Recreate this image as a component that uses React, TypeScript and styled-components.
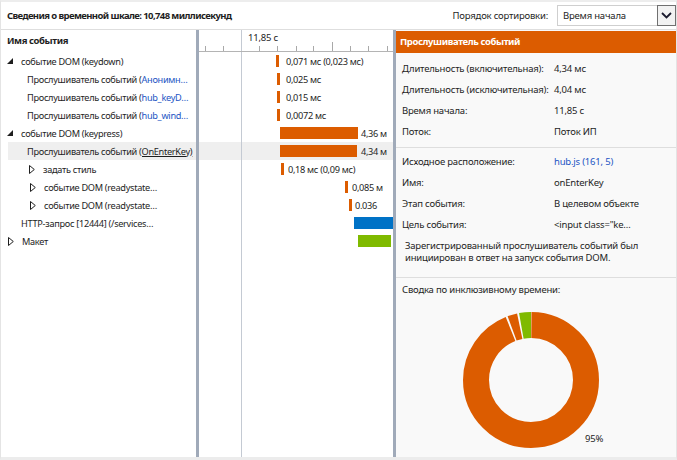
import React from 'react'
import styled, { createGlobalStyle } from 'styled-components'

const palette = {
	orange: '#dc5c00',
	blue: '#0072c6',
	green: '#7fba00',
	link: '#1c55c4',
	splitter: '#a0aab9',
	grid: '#c4cad3',
	line: '#dedede',
	panel: '#f9f9f9',
	text: '#1e1e1e',
	selected: '#efefef',
}

const GlobalStyle = createGlobalStyle`
	html, body { margin: 0; padding: 0; background: #fff; }
	body {
		font-family: "Noto Sans", "Open Sans", sans-serif;
		font-size: 9.5px;
		letter-spacing: -0.2px;
		color: ${palette.text};
	}
	* { box-sizing: border-box; }
`

type TreeItem = { indent: number; icon?: 'open' | 'closed'; text: string; link?: string; underline?: string; selected?: boolean }

const tree: TreeItem[] = [
	{ indent: 6, icon: 'open', text: 'событие DOM (keydown)' },
	{ indent: 12, text: 'Прослушиватель событий (', link: 'Анонимн…' },
	{ indent: 12, text: 'Прослушиватель событий (', link: 'hub_keyD…' },
	{ indent: 12, text: 'Прослушиватель событий (', link: 'hub_wind…' },
	{ indent: 6, icon: 'open', text: 'событие DOM (keypress)' },
	{ indent: 12, text: 'Прослушиватель событий ', underline: '(OnEnterKey)', selected: true },
	{ indent: 28, icon: 'closed', text: 'задать стиль' },
	{ indent: 29, icon: 'closed', text: 'событие DOM (readystate…' },
	{ indent: 29, icon: 'closed', text: 'событие DOM (readystate…' },
	{ indent: 6, text: 'HTTP-запрос [12444] (/services…' },
	{ indent: 7, icon: 'closed', text: 'Макет' },
]

type Span = { left: number; width: number; color: string; gap?: number; label?: string; selected?: boolean }

const spans: Span[] = [
	{ left: 77, width: 3, color: palette.orange, gap: 7, label: '0,071 мс (0,023 мс)' },
	{ left: 78, width: 3, color: palette.orange, gap: 6, label: '0,025 мс' },
	{ left: 78, width: 3, color: palette.orange, gap: 6, label: '0,015 мс' },
	{ left: 78, width: 3, color: palette.orange, gap: 6, label: '0,0072 мс' },
	{ left: 81, width: 78, color: palette.orange, gap: 3, label: '4,36 м' },
	{ left: 81, width: 77, color: palette.orange, gap: 4, label: '4,34 м', selected: true },
	{ left: 82, width: 3, color: palette.orange, gap: 4, label: '0,18 мс (0,09 мс)' },
	{ left: 146, width: 3, color: palette.orange, gap: 4, label: '0,085 м' },
	{ left: 150, width: 3, color: palette.orange, gap: 3, label: '0.036' },
	{ left: 155, width: 60, color: palette.blue },
	{ left: 159, width: 33, color: palette.green },
]

const general = [
	['Длительность (включительная):', '4,34 мс'],
	['Длительность (исключительная):', '4,04 мс'],
	['Время начала:', '11,85 с'],
	['Поток:', 'Поток ИП'],
]

const source = [
	['Исходное расположение:', 'hub.js (161, 5)', true],
	['Имя:', 'onEnterKey'],
	['Этап события:', 'В целевом объекте'],
	['Цель события:', '<input class="ke…'],
] as [string, string, boolean?][]

const ticks = [6, 24, 42, 60, 78, 97, 114, 133, 151, 169, 188]

const OpenArrow = () => (
	<svg width="6" height="6" viewBox="0 0 6 6">
		<polygon points="6,0 6,6 0,6" fill="#1e1e1e" />
	</svg>
)

const ClosedArrow = () => (
	<svg width="6" height="9" viewBox="0 0 6 9">
		<polygon points="0.5,0.5 5.3,4.5 0.5,8.5" fill="none" stroke="#1e1e1e" strokeWidth="1" />
	</svg>
)

const Chevron = () => (
	<svg width="11" height="7" viewBox="0 0 11 7">
		<polyline points="1,1 5.5,5.5 10,1" fill="none" stroke="#1a1a2e" strokeWidth="1.8" />
	</svg>
)

const Ruler = () => (
	<svg width="194" height="22" viewBox="0 0 194 22">
		{ticks.map((x, i) => (
			<line key={i} x1={x + 0.5} x2={x + 0.5} y1={i === 2 ? 0 : i === 7 ? 12 : 16} y2={22} stroke={i === 2 ? palette.grid : '#a9a9a9'} strokeWidth="1" />
		))}
		<line x1="0" x2="194" y1="21.5" y2="21.5" stroke="#b4b4b4" strokeWidth="1" />
		<text x="49" y="10.5" fontSize="9.5" fill="#1e1e1e" fontFamily="Noto Sans, sans-serif" letterSpacing="-0.2">
			11,85 с
		</text>
	</svg>
)

const C = 2 * Math.PI * 55
const seg = (startDeg: number, endDeg: number) => ({
	strokeDasharray: `${((endDeg - startDeg) / 360) * C} ${C}`,
	strokeDashoffset: -((startDeg / 360) * C),
})

const Donut = () => (
	<svg width="160" height="150" viewBox="0 0 160 150">
		<g transform="rotate(-90 70 74)">
			<circle cx="70" cy="74" r="55" fill="none" stroke={palette.orange} strokeWidth="26" style={seg(0.4, 337.6)} />
			<circle cx="70" cy="74" r="55" fill="none" stroke={palette.orange} strokeWidth="26" style={seg(339.3, 347.6)} />
			<circle cx="70" cy="74" r="55" fill="none" stroke={palette.green} strokeWidth="26" style={seg(349.3, 359.6)} />
		</g>
		<text x="124" y="136" fontSize="9.5" fill="#1e1e1e" fontFamily="Noto Sans, sans-serif" letterSpacing="-0.2">
			95%
		</text>
	</svg>
)

const App = () => {
	return (
		<>
			<GlobalStyle />
			<Frame>
				<Header>
					<Title>Сведения о временной шкале: 10,748 миллисекунд</Title>
					<SortGroup>
						<span>Порядок сортировки:</span>
						<Select>
							<SelectText>Время начала</SelectText>
							<SelectButton>
								<Chevron />
							</SelectButton>
						</Select>
					</SortGroup>
				</Header>
				<Main>
					<TreePane>
						<PaneTitle>Имя события</PaneTitle>
						{tree.map((item, i) => (
							<TreeRow key={i} $indent={item.indent} $selected={item.selected}>
								<Expander>{item.icon === 'open' ? <OpenArrow /> : item.icon === 'closed' ? <ClosedArrow /> : null}</Expander>
								<RowText>
									{item.text}
									{item.link && <Link>{item.link}</Link>}
									{item.underline && <Underlined>{item.underline}</Underlined>}
								</RowText>
							</TreeRow>
						))}
					</TreePane>
					<Splitter />
					<TimelinePane>
						<Ruler />
						<TimelineBody>
							{spans.map((s, i) => (
								<TimeRow key={i} $selected={s.selected}>
									<Bar $color={s.color} style={{ marginLeft: s.left, width: s.width }} />
									{s.label && <BarLabel style={{ marginLeft: s.gap }}>{s.label}</BarLabel>}
								</TimeRow>
							))}
						</TimelineBody>
					</TimelinePane>
					<Splitter />
					<DetailsPane>
						<DetailsTitle>Прослушиватель событий</DetailsTitle>
						<Section $pad="5px 0 5px 6px">
							{general.map(([k, v]) => (
								<Field key={k}>
									<span>{k}</span>
									<span>{v}</span>
								</Field>
							))}
						</Section>
						<Section $pad="3px 0 13px 6px">
							{source.map(([k, v, link]) => (
								<Field key={k}>
									<span>{k}</span>
									{link ? <Link>{v}</Link> : <span>{v}</span>}
								</Field>
							))}
							<Description>
								Зарегистрированный прослушиватель событий был
								<br />
								инициирован в ответ на запуск события DOM.
							</Description>
						</Section>
						<ChartSection>
							<ChartTitle>Сводка по инклюзивному времени:</ChartTitle>
							<ChartBox>
								<Donut />
							</ChartBox>
						</ChartSection>
					</DetailsPane>
				</Main>
			</Frame>
		</>
	)
}

const Frame = styled.div`
	width: 677px;
	height: 460px;
	border: 1px solid #e4e4e4;
	border-top: 2px solid #ededed;
	border-bottom: 3px solid #ececec;
	display: flex;
	flex-direction: column;
	background: #fff;
	overflow: hidden;
`

const Header = styled.div`
	height: 28px;
	flex: none;
	display: flex;
	align-items: center;
	justify-content: space-between;
	padding: 0 0 0 6px;
	border-bottom: 1px solid ${palette.line};
`

const Title = styled.div`
	font-weight: 700;
	letter-spacing: -0.6px;
`

const SortGroup = styled.div`
	display: flex;
	align-items: center;
	gap: 9px;
`

const Select = styled.div`
	width: 119px;
	height: 21px;
	border: 1px solid #cfcfcf;
	display: flex;
	align-items: stretch;
	background: #fff;
`

const SelectText = styled.span`
	flex: 1;
	display: flex;
	align-items: center;
	padding-left: 5px;
`

const SelectButton = styled.span`
	width: 19px;
	border: 1px solid #707070;
	margin: -1px -1px -1px 0;
	background: #f2f2f2;
	display: flex;
	align-items: center;
	justify-content: center;
`

const Main = styled.div`
	flex: 1;
	display: flex;
	min-height: 0;
`

const TreePane = styled.div`
	width: 195px;
	flex: none;
	overflow: hidden;
`

const PaneTitle = styled.div`
	height: 22px;
	line-height: 22px;
	padding-left: 6px;
	font-weight: 700;
	letter-spacing: -0.4px;
`

const TreeRow = styled.div<{ $indent: number; $selected?: boolean }>`
	height: 18px;
	display: flex;
	align-items: center;
	padding-left: ${({ $indent }) => $indent}px;
	padding-right: 2px;
	white-space: nowrap;
	font-size: 9.2px;
	letter-spacing: -0.3px;
	background: ${({ $selected }) => ($selected ? `linear-gradient(to right, transparent 7px, ${palette.selected} 7px)` : 'transparent')};
`

const Expander = styled.span`
	width: 14px;
	flex: none;
	display: flex;
	align-items: center;
`

const RowText = styled.span`
	flex: 1;
	overflow: hidden;
	text-overflow: ellipsis;
	min-width: 0;
`

const Link = styled.span`
	color: ${palette.link};
`

const Underlined = styled.span`
	text-decoration: underline;
`

const Splitter = styled.div`
	width: 3px;
	flex: none;
	background: ${palette.splitter};
`

const TimelinePane = styled.div`
	width: 194px;
	flex: none;
	display: flex;
	flex-direction: column;
	overflow: hidden;

	& > svg {
		display: block;
		flex: none;
	}
`

const gridLine = `linear-gradient(to right, transparent 42px, ${palette.grid} 42px, ${palette.grid} 43px, transparent 43px)`

const TimelineBody = styled.div`
	flex: 1;
	background-image: ${gridLine};
`

const TimeRow = styled.div<{ $selected?: boolean }>`
	height: 18px;
	display: flex;
	align-items: center;
	overflow: hidden;
	white-space: nowrap;
	background-color: ${({ $selected }) => ($selected ? palette.selected : 'transparent')};
	background-image: ${gridLine};
`

const Bar = styled.div<{ $color: string }>`
	flex: none;
	height: 12px;
	background: ${({ $color }) => $color};
`

const BarLabel = styled.span`
	flex: none;
	font-size: 9.2px;
	letter-spacing: -0.3px;
`

const DetailsPane = styled.div`
	flex: 1;
	background: ${palette.panel};
	display: flex;
	flex-direction: column;
	min-width: 0;
`

const DetailsTitle = styled.div`
	margin-top: 1px;
	height: 22px;
	line-height: 22px;
	padding-left: 4px;
	background: ${palette.orange};
	color: #fff;
	font-weight: 700;
	letter-spacing: -0.4px;
`

const Section = styled.div<{ $pad: string }>`
	padding: ${({ $pad }) => $pad};
	border-bottom: 1px solid ${palette.line};
`

const Field = styled.div`
	display: grid;
	grid-template-columns: 152px 1fr;
	height: 21px;
	align-items: center;
	white-space: nowrap;
`

const Description = styled.div`
	margin-top: 5px;
	padding-left: 3px;
	line-height: 12px;
`

const ChartSection = styled.div`
	flex: 1;
	padding: 6px 0 0 6px;
`

const ChartTitle = styled.div`
	line-height: 12px;
`

const ChartBox = styled.div`
	margin: 10px 0 0 59px;

	& > svg {
		display: block;
	}
`

export default App
